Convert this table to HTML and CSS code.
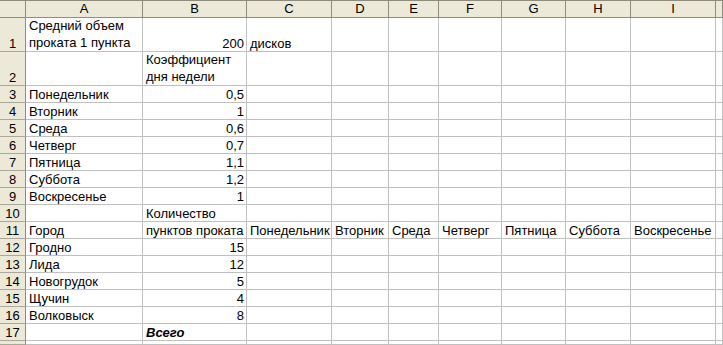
FILE: index.html
```html
<!DOCTYPE html>
<html lang="ru">
<head>
<meta charset="utf-8">
<title>Прокат дисков</title>
<link rel="stylesheet" href="styles.css">
</head>
<body>
<div class="sheet">
  <!-- column headers -->
  <div class="corner"></div>
  <div class="colhead">A</div><div class="colhead">B</div><div class="colhead">C</div><div class="colhead">D</div><div class="colhead">E</div><div class="colhead">F</div><div class="colhead">G</div><div class="colhead">H</div><div class="colhead">I</div><div class="colhead"></div>

  <!-- 1 -->
  <div class="rowhead">1</div>
  <div class="cell wrap">Средний объем проката 1 пункта</div><div class="cell num">200</div><div class="cell">дисков</div><div class="cell"></div><div class="cell"></div><div class="cell"></div><div class="cell"></div><div class="cell"></div><div class="cell"></div><div class="cell"></div>
  <!-- 2 -->
  <div class="rowhead">2</div>
  <div class="cell"></div><div class="cell wrap">Коэффициент дня недели</div><div class="cell"></div><div class="cell"></div><div class="cell"></div><div class="cell"></div><div class="cell"></div><div class="cell"></div><div class="cell"></div><div class="cell"></div>
  <!-- 3 -->
  <div class="rowhead">3</div>
  <div class="cell">Понедельник</div><div class="cell num">0,5</div><div class="cell"></div><div class="cell"></div><div class="cell"></div><div class="cell"></div><div class="cell"></div><div class="cell"></div><div class="cell"></div><div class="cell"></div>
  <!-- 4 -->
  <div class="rowhead">4</div>
  <div class="cell">Вторник</div><div class="cell num">1</div><div class="cell"></div><div class="cell"></div><div class="cell"></div><div class="cell"></div><div class="cell"></div><div class="cell"></div><div class="cell"></div><div class="cell"></div>
  <!-- 5 -->
  <div class="rowhead">5</div>
  <div class="cell">Среда</div><div class="cell num">0,6</div><div class="cell"></div><div class="cell"></div><div class="cell"></div><div class="cell"></div><div class="cell"></div><div class="cell"></div><div class="cell"></div><div class="cell"></div>
  <!-- 6 -->
  <div class="rowhead">6</div>
  <div class="cell">Четверг</div><div class="cell num">0,7</div><div class="cell"></div><div class="cell"></div><div class="cell"></div><div class="cell"></div><div class="cell"></div><div class="cell"></div><div class="cell"></div><div class="cell"></div>
  <!-- 7 -->
  <div class="rowhead">7</div>
  <div class="cell">Пятница</div><div class="cell num">1,1</div><div class="cell"></div><div class="cell"></div><div class="cell"></div><div class="cell"></div><div class="cell"></div><div class="cell"></div><div class="cell"></div><div class="cell"></div>
  <!-- 8 -->
  <div class="rowhead">8</div>
  <div class="cell">Суббота</div><div class="cell num">1,2</div><div class="cell"></div><div class="cell"></div><div class="cell"></div><div class="cell"></div><div class="cell"></div><div class="cell"></div><div class="cell"></div><div class="cell"></div>
  <!-- 9 -->
  <div class="rowhead">9</div>
  <div class="cell">Воскресенье</div><div class="cell num">1</div><div class="cell"></div><div class="cell"></div><div class="cell"></div><div class="cell"></div><div class="cell"></div><div class="cell"></div><div class="cell"></div><div class="cell"></div>
  <!-- 10 -->
  <div class="rowhead">10</div>
  <div class="cell"></div><div class="cell">Количество</div><div class="cell"></div><div class="cell"></div><div class="cell"></div><div class="cell"></div><div class="cell"></div><div class="cell"></div><div class="cell"></div><div class="cell"></div>
  <!-- 11 -->
  <div class="rowhead">11</div>
  <div class="cell">Город</div><div class="cell">пунктов проката</div><div class="cell">Понедельник</div><div class="cell">Вторник</div><div class="cell">Среда</div><div class="cell">Четверг</div><div class="cell">Пятница</div><div class="cell">Суббота</div><div class="cell">Воскресенье</div><div class="cell"></div>
  <!-- 12 -->
  <div class="rowhead">12</div>
  <div class="cell">Гродно</div><div class="cell num">15</div><div class="cell"></div><div class="cell"></div><div class="cell"></div><div class="cell"></div><div class="cell"></div><div class="cell"></div><div class="cell"></div><div class="cell"></div>
  <!-- 13 -->
  <div class="rowhead">13</div>
  <div class="cell">Лида</div><div class="cell num">12</div><div class="cell"></div><div class="cell"></div><div class="cell"></div><div class="cell"></div><div class="cell"></div><div class="cell"></div><div class="cell"></div><div class="cell"></div>
  <!-- 14 -->
  <div class="rowhead">14</div>
  <div class="cell">Новогрудок</div><div class="cell num">5</div><div class="cell"></div><div class="cell"></div><div class="cell"></div><div class="cell"></div><div class="cell"></div><div class="cell"></div><div class="cell"></div><div class="cell"></div>
  <!-- 15 -->
  <div class="rowhead">15</div>
  <div class="cell">Щучин</div><div class="cell num">4</div><div class="cell"></div><div class="cell"></div><div class="cell"></div><div class="cell"></div><div class="cell"></div><div class="cell"></div><div class="cell"></div><div class="cell"></div>
  <!-- 16 -->
  <div class="rowhead">16</div>
  <div class="cell">Волковыск</div><div class="cell num">8</div><div class="cell"></div><div class="cell"></div><div class="cell"></div><div class="cell"></div><div class="cell"></div><div class="cell"></div><div class="cell"></div><div class="cell"></div>
  <!-- 17 -->
  <div class="rowhead">17</div>
  <div class="cell"></div><div class="cell total">Всего</div><div class="cell"></div><div class="cell"></div><div class="cell"></div><div class="cell"></div><div class="cell"></div><div class="cell"></div><div class="cell"></div><div class="cell"></div>
  <!-- 18 -->
  <div class="rowhead"></div>
  <div class="cell"></div><div class="cell"></div><div class="cell"></div><div class="cell"></div><div class="cell"></div><div class="cell"></div><div class="cell"></div><div class="cell"></div><div class="cell"></div><div class="cell"></div>
</div>
</body>
</html>
```

FILE: styles.css
```css
html, body {
  margin: 0;
  padding: 0;
  background: #ffffff;
  overflow: hidden;
}

.sheet {
  display: grid;
  grid-template-columns: 26px 117px 104px 85px 57px 50px 63px 64px 65px 85px 7px;
  grid-template-rows: 18px 34px 34px repeat(15, 17px) 4px;
  font-family: "Liberation Sans", Arial, sans-serif;
  font-size: 13px;
  color: #000000;
}

.sheet > div {
  box-sizing: border-box;
  overflow: hidden;
  white-space: nowrap;
}

/* header strip */
.corner,
.colhead {
  background: #ece9d8;
  border-top: 1px solid #8e8c7c;
  border-bottom: 1px solid #8e8c7c;
  border-right: 1px solid #8e8c7c;
  text-align: center;
  line-height: 16px;
}

.rowhead {
  background: #ece9d8;
  border-right: 1px solid #8e8c7c;
  border-bottom: 1px solid #aca899;
  display: flex;
  align-items: flex-end;
  justify-content: center;
  line-height: 15px;
}

/* worksheet cells */
.cell {
  border-right: 1px solid #c0c0c0;
  border-bottom: 1px solid #c0c0c0;
  display: flex;
  align-items: flex-end;
  padding: 0 2px 0 3px;
  line-height: 15px;
}

.cell.num {
  justify-content: flex-end;
}

.cell.wrap {
  white-space: normal;
  line-height: 17px;
}

.cell.total {
  font-weight: bold;
  font-style: italic;
}
```
